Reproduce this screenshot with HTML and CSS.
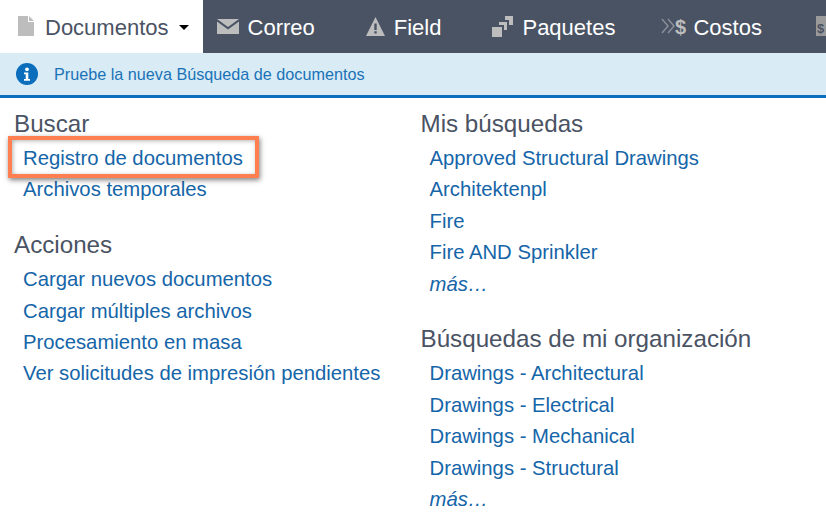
FILE: index.html
```html
<!DOCTYPE html>
<html lang="es">
<head>
    <meta charset="UTF-8">
    <title>Documentos</title>
    <link rel="stylesheet" href="styles.css">
</head>
<body>
    <div class="nav">
        <div class="nav-item nav-active">
            <svg class="nav-icon" width="16" height="20" viewBox="0 0 16 20"><path d="M0 0h10v6h6v14H0z" fill="#bdbdbd"/><path d="M11 0l5 5h-5z" fill="#bdbdbd"/></svg>
            <span>Documentos</span>
            <span class="caret"></span>
        </div>
        <div class="nav-item">
            <svg class="nav-icon" width="22" height="15" viewBox="0 0 22 15"><path d="M0 0h22L11 8z" fill="#bdbdbd"/><path d="M0 2.500l11 8 11-8V15H0z" fill="#bdbdbd"/></svg>
            <span>Correo</span>
        </div>
        <div class="nav-item">
            <svg class="nav-icon" width="19" height="19" viewBox="0 0 19 19"><path fill-rule="evenodd" d="M9.500 0L19 19H0zM8.300 6.500v6.500h2.400V6.500zM8.300 14.200v2.300h2.400v-2.300z" fill="#bdbdbd"/></svg>
            <span>Field</span>
        </div>
        <div class="nav-item">
            <svg class="nav-icon" width="21" height="21" viewBox="0 0 21 21"><path d="M0 11h10v10H0zM7 6h8v8h-3V9H7zM13 0h8v9h-4V4h-4z" fill="#bdbdbd"/></svg>
            <span>Paquetes</span>
        </div>
        <div class="nav-item nav-costos">
            <svg class="nav-icon" width="25" height="20" viewBox="0 0 25 20"><path d="M0 3l6 7-6 7M6 3l6 7-6 7" fill="none" stroke="#8a8f99" stroke-width="1.500"/><text x="13" y="18" class="dollar">$</text></svg>
            <span>Costos</span>
        </div>
        <div class="nav-item nav-last">
            <svg class="nav-icon" width="16" height="20" viewBox="0 0 16 20"><path d="M0 0h11l5 5v15H0z" fill="#9a9a9a"/><text x="1" y="17" class="dollar-small">$</text></svg>
        </div>
    </div>

    <div class="notice">
        <svg width="22" height="22" viewBox="0 0 22 22"><circle cx="11" cy="11" r="11" fill="#0a6ebd"/><circle cx="11" cy="6.300" r="1.900" fill="#fff"/><path d="M8 9.500h4.300v6.500H14v1.800H8V16h1.700v-4.700H8z" fill="#fff"/></svg>
        <span>Pruebe la nueva Búsqueda de documentos</span>
    </div>

    <div class="content">
        <div class="column">
            <div class="section">
                <h3>Buscar</h3>
                <div class="link-row"><a class="highlight">Registro de documentos</a></div>
                <div class="link-row"><a>Archivos temporales</a></div>
            </div>
            <div class="section">
                <h3>Acciones</h3>
                <div class="link-row"><a>Cargar nuevos documentos</a></div>
                <div class="link-row"><a>Cargar múltiples archivos</a></div>
                <div class="link-row"><a>Procesamiento en masa</a></div>
                <div class="link-row"><a>Ver solicitudes de impresión pendientes</a></div>
            </div>
        </div>
        <div class="column">
            <div class="section">
                <h3>Mis búsquedas</h3>
                <div class="link-row"><a>Approved Structural Drawings</a></div>
                <div class="link-row"><a>Architektenpl</a></div>
                <div class="link-row"><a>Fire</a></div>
                <div class="link-row"><a>Fire AND Sprinkler</a></div>
                <div class="link-row"><a class="more">más…</a></div>
            </div>
            <div class="section">
                <h3>Búsquedas de mi organización</h3>
                <div class="link-row"><a>Drawings - Architectural</a></div>
                <div class="link-row"><a>Drawings - Electrical</a></div>
                <div class="link-row"><a>Drawings - Mechanical</a></div>
                <div class="link-row"><a>Drawings - Structural</a></div>
                <div class="link-row"><a class="more">más…</a></div>
            </div>
        </div>
    </div>
</body>
</html>
```

FILE: styles.css
```css
* {
    margin: 0;
    padding: 0;
    box-sizing: border-box;
}

html, body {
    height: 531px;
    overflow: hidden;
}

body {
    font-family: "Liberation Sans", Arial, sans-serif;
    background: white;
    color: #4a5364;
}

.nav {
    display: flex;
    height: 53px;
    background: #4a5364;
    overflow: hidden;
}

.nav-item {
    display: flex;
    align-items: center;
    flex-shrink: 0;
    padding: 2px 36px 0 15px;
    color: white;
    font-size: 22px;
}

.nav-active {
    background: white;
    color: #4a5364;
    padding: 2px 14px 0 18px;
}

.nav-active + .nav-item {
    padding-left: 14px;
}

.nav-active .nav-icon {
    margin-right: 11px;
}

.nav-costos {
    margin-left: -4px;
}

.nav-costos .nav-icon {
    margin-right: 6px;
    overflow: visible;
}

.nav-last {
    margin-left: 3px;
}

.nav-icon {
    margin-right: 9px;
    margin-top: -3px;
}

.dollar {
    font-family: "Liberation Sans", Arial, sans-serif;
    font-size: 20px;
    font-weight: bold;
    fill: #bdbdbd;
}

.dollar-small {
    font-family: "Liberation Sans", Arial, sans-serif;
    font-size: 13px;
    font-weight: bold;
    fill: #4a5364;
}

.caret {
    width: 0;
    height: 0;
    margin-left: 10px;
    border-left: 5px solid transparent;
    border-right: 5px solid transparent;
    border-top: 5px solid black;
}

.notice {
    display: flex;
    align-items: center;
    gap: 16px;
    height: 45px;
    padding: 0 16px;
    background: #d9ebf5;
    border-bottom: 3px solid #0a6ebd;
    color: #1a73b8;
    font-size: 16.200px;
}

.content {
    display: grid;
    grid-template-columns: 406.500px 1fr;
    padding: 12px 14px 0;
}

.section {
    margin-bottom: 25.500px;
}

h3 {
    font-size: 24.200px;
    font-weight: normal;
    line-height: 28px;
    margin-bottom: 5px;
    color: #4a5364;
}

.link-row {
    padding-left: 9px;
    height: 31.400px;
    line-height: 31.400px;
    font-size: 20.300px;
    color: #1565a8;
}

.more {
    font-style: italic;
}

.highlight {
    position: relative;
}

.highlight::after {
    content: "";
    position: absolute;
    left: -15px;
    right: -16px;
    top: -11px;
    bottom: -9px;
    border: 4px solid #ff7f50;
    box-shadow: 1px 2px 5px rgba(0,0,0,0.5), inset 1px 1px 4px rgba(0,0,0,0.3);
}
```
